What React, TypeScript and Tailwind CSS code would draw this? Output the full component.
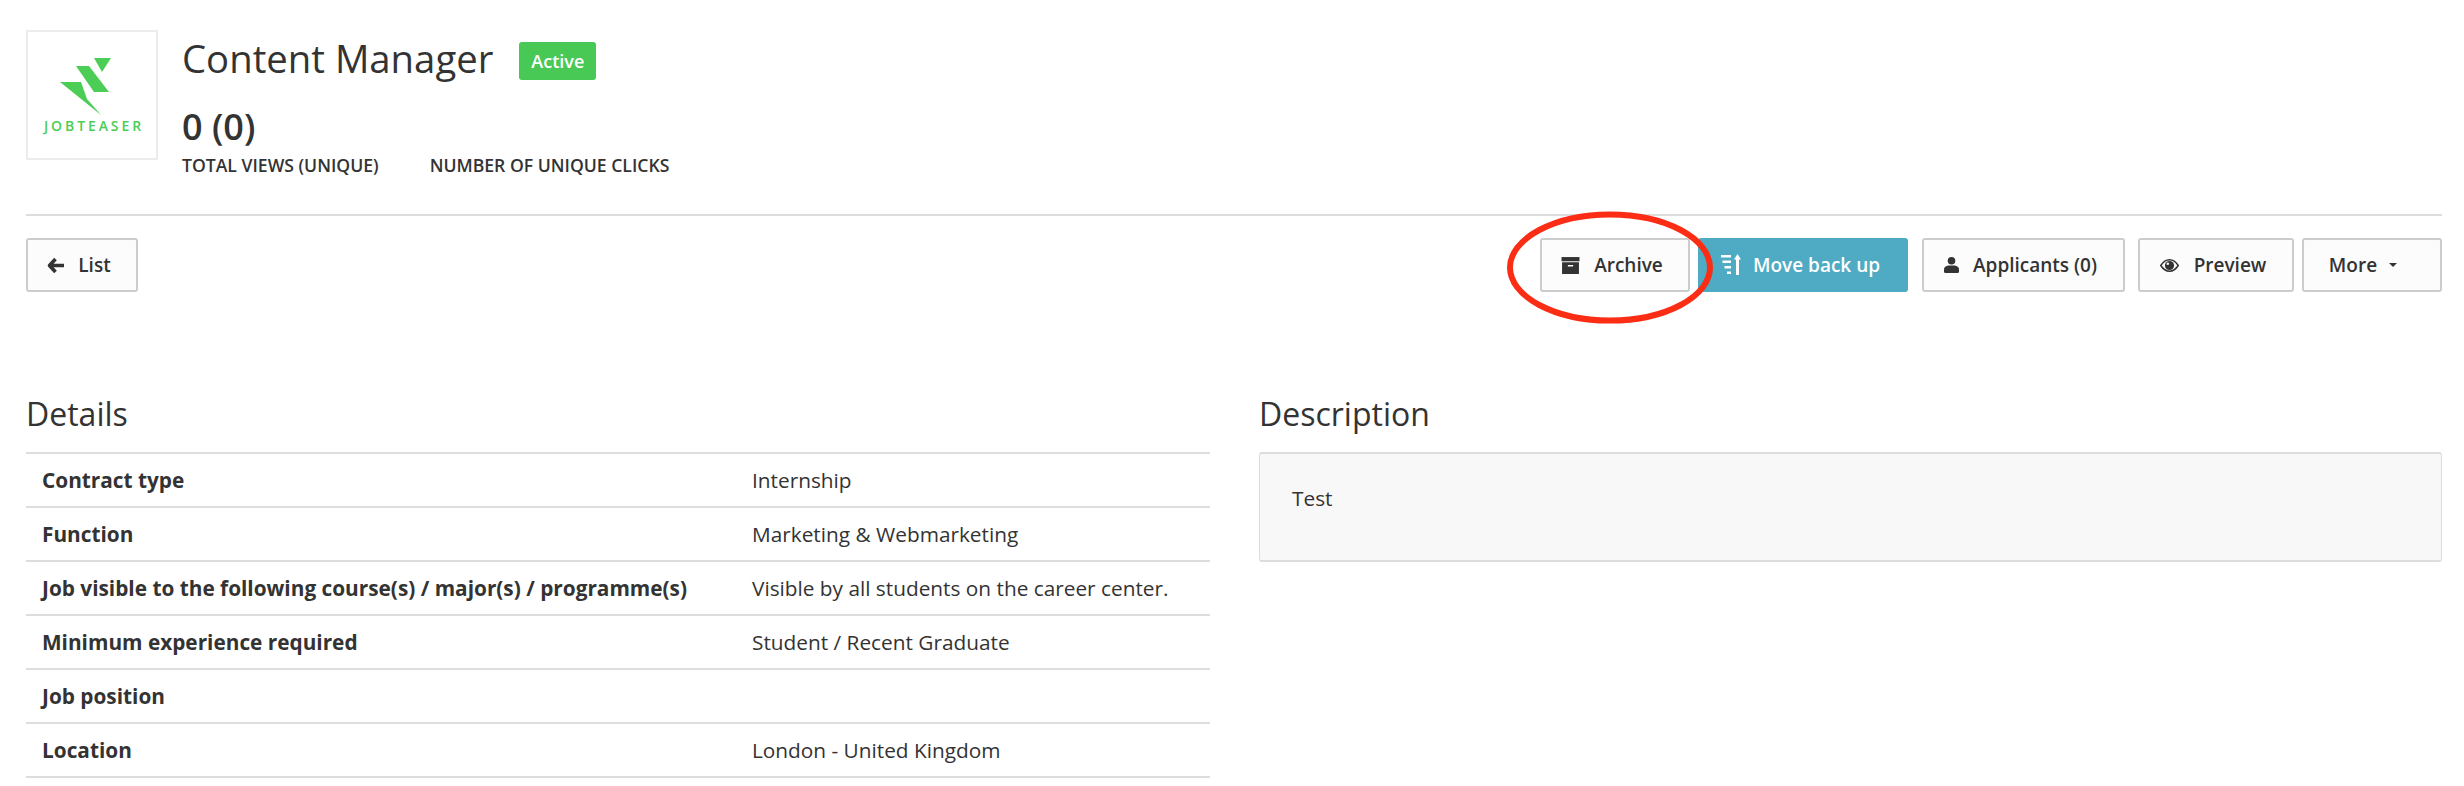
const rows = [
  { label: 'Contract type', value: 'Internship' },
  { label: 'Function', value: 'Marketing & Webmarketing' },
  { label: 'Job visible to the following course(s) / major(s) / programme(s)', value: 'Visible by all students on the career center.' },
  { label: 'Minimum experience required', value: 'Student / Recent Graduate' },
  { label: 'Job position', value: '' },
  { label: 'Location', value: 'London - United Kingdom' },
];

function Logo() {
  return (
    <div className="relative w-[132px] h-[130px] shrink-0 border-2 border-[#ececec] bg-white">
      <svg viewBox="0 0 131 130" className="absolute -left-[2px] -top-[2px] w-[131px] h-[130px]" fill="#4ccd55">
        <polygon points="68,28 85,28 76,42" />
        <polygon points="50,36 63,36 83,62 68,62" />
        <polygon points="34,52 55,52 61,69 75,85" />
      </svg>
      <span className="absolute top-[84px] left-[16px] text-[14px] leading-[20px] font-semibold tracking-[2.9px] text-[#4ccd55]">JOBTEASER</span>
    </div>
  );
}

function ArrowIcon() {
  return (
    <svg viewBox="0 0 17 17" className="w-[17px] h-[17px]" fill="none" stroke="#333333" strokeWidth="3.6" strokeLinejoin="round">
      <path d="M8.5 2 L2.5 8.5 L8.5 15 M3 8.5 H17" />
    </svg>
  );
}

function ArchiveIcon() {
  return (
    <svg viewBox="0 0 18 18" className="w-[19px] h-[19px]" fill="#333333">
      <rect x="0.5" y="1" width="17" height="4" />
      <path d="M1 6h16v11H1z M6.5 8.5v1.5h5V8.5z" fillRule="evenodd" />
    </svg>
  );
}

function MoveUpIcon() {
  return (
    <svg viewBox="0 0 20 24" className="w-[20px] h-[24px]" fill="#ffffff">
      <rect x="0" y="2" width="10" height="2.5" />
      <rect x="1.5" y="7.5" width="8.5" height="2.5" />
      <rect x="3.5" y="13" width="6.5" height="2.5" />
      <rect x="6" y="18.5" width="4" height="2.5" />
      <path d="M16.5 1 L20 6.5 H18 V22 H15 V6.5 H13 Z" />
    </svg>
  );
}

function UserIcon() {
  return (
    <svg viewBox="0 0 15 16" className="w-[15px] h-[16px]" fill="#333333">
      <ellipse cx="7.5" cy="3.8" rx="3.8" ry="3.8" />
      <path d="M0 12.5 C0 9.5 3 8.5 5 8.5 H10 C12 8.5 15 9.5 15 12.5 V14.5 Q15 16 13.5 16 H1.5 Q0 16 0 14.5 Z" />
    </svg>
  );
}

function EyeIcon() {
  return (
    <svg viewBox="0 0 19 13" className="w-[19px] h-[13px]">
      <path d="M0.8 6.5 C3.5 2.2 6.5 0.8 9.5 0.8 C12.5 0.8 15.5 2.2 18.2 6.5 C15.5 10.8 12.5 12.2 9.5 12.2 C6.5 12.2 3.5 10.8 0.8 6.5 Z" fill="none" stroke="#333333" strokeWidth="1.5" />
      <circle cx="9.5" cy="6.5" r="4.6" fill="#333333" />
      <circle cx="7.8" cy="4.8" r="1.3" fill="#fcfcfc" />
    </svg>
  );
}

function Btn({ children, className = '' }: { children: React.ReactNode; className?: string }) {
  return (
    <button className={`h-[54px] flex items-center justify-center rounded-[3px] border-2 border-[#cccccc] bg-[#fcfcfc] text-[19px] font-semibold text-[#333333] ${className}`}>
      {children}
    </button>
  );
}

export default function App() {
  return (
    <div className="relative w-[2464px] h-[786px] overflow-hidden bg-white pl-[26px] pr-[22px] pt-[30px] text-[#333333] font-['Open_Sans',sans-serif]">
      <div className="flex h-[186px] border-b-2 border-[#dddddd] mb-[22px]">
        <Logo />
        <div className="ml-[24px] flex flex-col">
          <div className="flex items-start h-[56px]">
            <h1 className="text-[38.3px] leading-[56px]">Content Manager</h1>
            <span className="ml-[26px] mt-[12px] h-[38px] w-[77px] rounded-[3px] bg-[#48c854] text-white text-[18px] font-semibold flex items-center justify-center">Active</span>
          </div>
          <div className="mt-[17px] text-[36px] leading-[48px] font-semibold">0 (0)</div>
          <div className="flex gap-[51px] text-[17.6px] leading-[24px] font-semibold mt-[2px]">
            <span>TOTAL VIEWS (UNIQUE)</span>
            <span>NUMBER OF UNIQUE CLICKS</span>
          </div>
        </div>
      </div>

      <div className="flex items-start justify-between">
        <Btn className="w-[112px] gap-[14px] pr-[6px]">
          <ArrowIcon />
          List
        </Btn>
        <div className="flex">
          <Btn className="w-[150px] gap-[14px] pr-[6px]">
            <ArchiveIcon />
            Archive
          </Btn>
          <button className="ml-[8px] h-[54px] w-[210px] flex items-center justify-center gap-[12px] rounded-[3px] bg-[#4eabc3] text-white text-[19px] font-semibold pr-[5px]">
            <MoveUpIcon />
            Move back up
          </button>
          <Btn className="ml-[14px] w-[203px] gap-[14px] pr-[6px]">
            <UserIcon />
            Applicants (0)
          </Btn>
          <Btn className="ml-[13px] w-[156px] gap-[15px] pr-[6px]">
            <EyeIcon />
            Preview
          </Btn>
          <Btn className="ml-[8px] w-[140px] gap-[12px] pr-[18px]">
            More
            <span className="w-0 h-0 border-x-[4px] border-x-transparent border-t-[4px] border-t-[#333333]" />
          </Btn>
        </div>
      </div>

      <div className="flex mt-[100px]">
        <div className="w-[1184px]">
          <h2 className="text-[32px] leading-[44px] h-[60px]">Details</h2>
          <div className="border-t-2 border-[#dddddd]">
            {rows.map((row) => (
              <div key={row.label} className="flex h-[54px] items-center border-b-2 border-[#dddddd] pt-[1px] text-[20.8px]">
                <div className="w-[726px] pl-[16px] font-bold">{row.label}</div>
                <div>{row.value}</div>
              </div>
            ))}
          </div>
        </div>
        <div className="ml-[49px] flex-1">
          <h2 className="text-[32px] leading-[44px] h-[60px]">Description</h2>
          <div className="h-[110px] rounded-[3px] border border-[#dddddd] border-t-2 border-b-2 bg-[#f8f8f8] px-[32px] pt-[29px] text-[20.8px] leading-[30px]">Test</div>
        </div>
      </div>

      <svg viewBox="0 0 210 115" className="absolute left-[1505px] top-[210px] w-[210px] h-[115px]" fill="none">
        <ellipse cx="105" cy="57.5" rx="100" ry="53" stroke="#fb2d14" strokeWidth="6" />
      </svg>
    </div>
  );
}
